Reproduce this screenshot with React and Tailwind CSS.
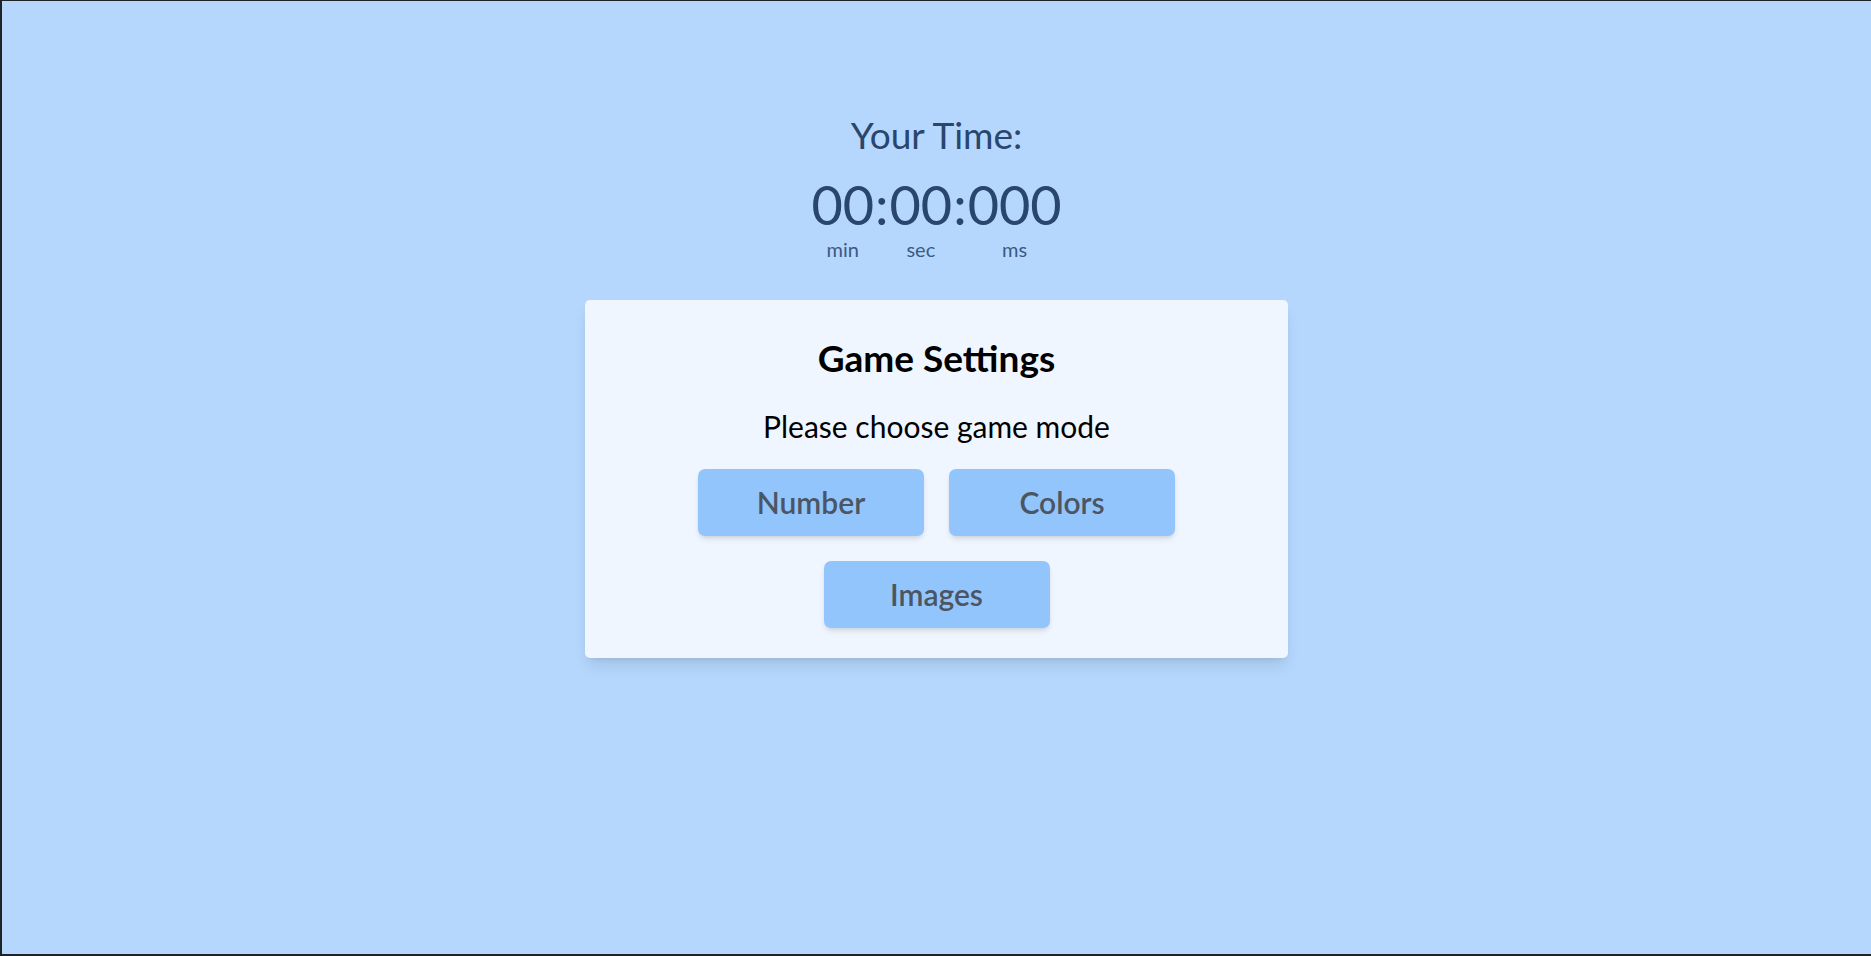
import React from 'react';

const font = { fontFamily: 'Lato, "Open Sans", sans-serif' };

function TimeGroup({ value, label }) {
  return (
    <div className="flex flex-col items-center">
      <span className="text-[54px] leading-[60px] text-[#29466d]">{value}</span>
      <span className="mt-[2px] text-[20px] leading-[24px] text-[#3c5a83]">{label}</span>
    </div>
  );
}

function Colon() {
  return <span className="text-[54px] leading-[60px] text-[#29466d] px-[1px]">:</span>;
}

function ModeButton({ children }) {
  return (
    <button className="w-[226px] h-[67px] rounded-[7px] bg-[#93c5fd] text-[30px] font-semibold text-[#4b5563] shadow-md flex items-center justify-center">
      {children}
    </button>
  );
}

export default function App() {
  return (
    <div
      style={font}
      className="min-h-screen h-[956px] bg-[#b5d7fd] border-t border-l-2 border-b-2 border-[#1f2328] flex flex-col items-center pt-[110px]"
    >
      {/* timer */}
      <p className="text-[37px] leading-[48px] text-[#29466d]">Your Time:</p>
      <div className="mt-[16px] flex items-start">
        <TimeGroup value="00" label="min" />
        <Colon />
        <TimeGroup value="00" label="sec" />
        <Colon />
        <TimeGroup value="000" label="ms" />
      </div>

      {/* settings card */}
      <div className="mt-[39px] w-[703px] bg-[#eff6ff] rounded-[5px] shadow-lg pt-[36px] pb-[30px] flex flex-col items-center">
        <h2 className="text-[37px] leading-[44px] font-bold text-black">Game Settings</h2>
        <p className="mt-[26px] text-[30px] leading-[40px] text-black">Please choose game mode</p>
        <div className="mt-[23px] flex flex-wrap justify-center gap-[25px] w-[480px]">
          <ModeButton>Number</ModeButton>
          <ModeButton>Colors</ModeButton>
          <ModeButton>Images</ModeButton>
        </div>
      </div>
    </div>
  );
}
